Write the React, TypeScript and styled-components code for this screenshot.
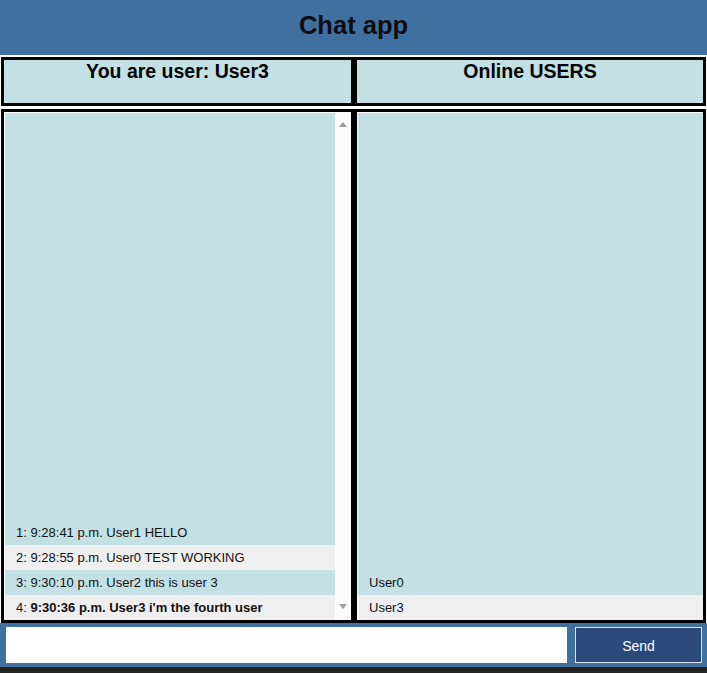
import React from "react"
import styled, { createGlobalStyle } from "styled-components"

const GlobalStyle = createGlobalStyle`
  html, body {
    margin: 0;
    padding: 0;
    background: #ffffff;
  }

  * {
    box-sizing: border-box;
  }
`

const Page = styled.div`
  display: flex;
  flex-direction: column;
  height: 100vh;
  font-family: "Liberation Sans", Arial, sans-serif;
  color: #000;
  background: #fff;
`

const Header = styled.header`
  height: 55px;
  flex: none;
  display: flex;
  align-items: center;
  justify-content: center;
  background-color: #40709f;
  margin-bottom: 2px;
  padding-bottom: 4px;

  h1 {
    margin: 0;
    font-size: 25.5px;
    font-weight: bold;
    color: #0d0d12;
  }
`

const Row = styled.div<{ $grow?: boolean }>`
  display: grid;
  grid-template-columns: 353px 1fr;
  padding: 0 1px;
  flex: ${p => (p.$grow ? "1" : "none")};
  min-height: 0;
`

const TitleBox = styled.div`
  height: 49px;
  border: 3px solid #000;
  background-color: #c3e0e4;
  text-align: center;
  margin-bottom: 3px;

  h3 {
    margin: 0;
    font-size: 19.5px;
    line-height: 22px;
    font-weight: bold;
  }
`

const PanelBox = styled.div`
  border: 3px solid #000;
  background-color: #fff;
  padding: 1px 0 0 1px;
  display: flex;
  min-height: 0;
`

const List = styled.ul`
  flex: 1;
  margin: 0;
  padding: 0;
  list-style: none;
  background-color: #c3e0e4;
  display: flex;
  flex-direction: column;
  justify-content: flex-end;
`

const Item = styled.li<{ $alt?: boolean }>`
  height: 25px;
  display: flex;
  align-items: center;
  padding-left: 11px;
  font-size: 13px;
  color: #111;
  background-color: ${p => (p.$alt ? "#efefef" : "transparent")};

  b {
    white-space: pre;
  }
`

const Scrollbar = styled.div`
  width: 16px;
  flex: none;
  background-color: #fcfcfc;
  display: flex;
  flex-direction: column;
  justify-content: space-between;
  align-items: center;
  padding: 9px 0 11px;
`

const Arrow = styled.span<{ $down?: boolean }>`
  width: 0;
  height: 0;
  border-left: 4.5px solid transparent;
  border-right: 4.5px solid transparent;
  ${p =>
    p.$down
      ? "border-top: 5px solid #9c9c9c;"
      : "border-bottom: 5px solid #9c9c9c;"}
`

const SendBar = styled.form`
  height: 44px;
  flex: none;
  display: flex;
  gap: 8px;
  padding: 4px 5px 4px 6px;
  background-color: #40709f;
`

const MessageInput = styled.input`
  flex: 1;
  height: 36px;
  border: none;
  outline: none;
  background: #fff;
  font-family: inherit;
  font-size: 14px;
`

const SendButton = styled.button`
  width: 127px;
  height: 36px;
  border: 1px solid #dfe6ee;
  background-color: #2b4a7b;
  color: #fff;
  font-family: "Liberation Sans", Arial, sans-serif;
  font-size: 14px;
  padding-top: 2px;
`

const Taskbar = styled.div`
  height: 6px;
  flex: none;
  background-color: #262626;
`

const messages = [
  { n: 1, time: "9:28:41 p.m.", user: "User1", text: "HELLO" },
  { n: 2, time: "9:28:55 p.m.", user: "User0", text: "TEST WORKING" },
  { n: 3, time: "9:30:10 p.m.", user: "User2", text: "this is user 3" },
  { n: 4, time: "9:30:36 p.m.", user: "User3", text: "i'm the fourth user" },
]

const me = "User3"
const onlineUsers = ["User0", "User3"]

export default function App() {
  return (
    <Page>
      <GlobalStyle />
      <Header>
        <h1>Chat app</h1>
      </Header>

      <Row>
        <TitleBox>
          <h3>You are user: {me}</h3>
        </TitleBox>
        <TitleBox>
          <h3>Online USERS</h3>
        </TitleBox>
      </Row>

      <Row $grow>
        <PanelBox>
          <List>
            {messages.map((m, i) => {
              const line = `${m.time} ${m.user} ${m.text}`
              return (
                <Item key={m.n} $alt={i % 2 === 1}>
                  {m.n}:&nbsp;{m.user === me ? <b>{line}</b> : line}
                </Item>
              )
            })}
          </List>
          <Scrollbar>
            <Arrow />
            <Arrow $down />
          </Scrollbar>
        </PanelBox>
        <PanelBox>
          <List>
            {onlineUsers.map((u, i) => (
              <Item key={u} $alt={i % 2 === 1}>
                {u}
              </Item>
            ))}
          </List>
        </PanelBox>
      </Row>

      <SendBar onSubmit={e => e.preventDefault()}>
        <MessageInput type="text" />
        <SendButton type="submit">Send</SendButton>
      </SendBar>
      <Taskbar />
    </Page>
  )
}
